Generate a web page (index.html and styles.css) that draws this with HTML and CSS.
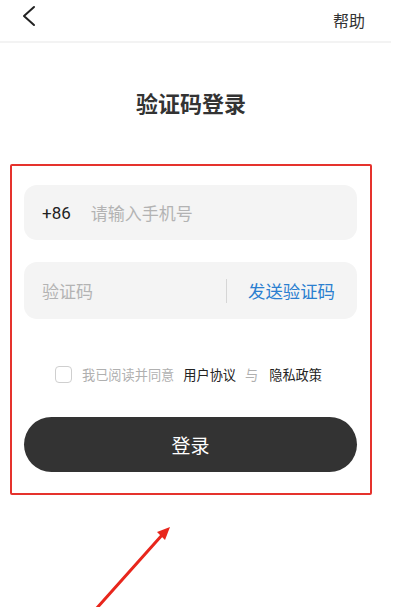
FILE: index.html
```html
<!DOCTYPE html>
<html lang="zh">
<head>
<meta charset="utf-8">
<link rel="stylesheet" href="styles.css">
</head>
<body>
<div class="page">
  <header class="topbar">
    <svg class="back" width="16" height="22" viewBox="0 0 16 22"><path d="M13 2 L3 11 L13 20" fill="none" stroke="#222" stroke-width="2" stroke-linecap="round" stroke-linejoin="round"/></svg>
    <span class="help">帮助</span>
  </header>
  <h1 class="title">验证码登录</h1>
  <div class="form">
    <div class="field">
      <span class="prefix">+86</span>
      <span class="placeholder">请输入手机号</span>
    </div>
    <div class="field field-code">
      <span class="placeholder grow">验证码</span>
      <span class="vline"></span>
      <span class="send">发送验证码</span>
    </div>
    <div class="agree">
      <span class="check"></span>
      <span class="muted">我已阅读并同意</span>
      <span class="link">用户协议</span>
      <span class="muted">与</span>
      <span class="link">隐私政策</span>
    </div>
    <button class="login">登录</button>
  </div>
  <svg class="arrow" width="396" height="607" viewBox="0 0 396 607">
    <line x1="96" y1="609" x2="163" y2="534" stroke="#e8261c" stroke-width="3" stroke-linecap="round"/>
    <polygon points="170,527 157,532 165,540" fill="#e8261c"/>
  </svg>
</div>
</body>
</html>
```
FILE: styles.css
```css
* { box-sizing: border-box; }
html, body { margin: 0; padding: 0; background: #fff; }
body {
  font-family: "Noto Sans CJK SC", "Noto Sans", sans-serif;
  color: #333;
}
.page {
  position: relative;
  width: 396px;
  height: 607px;
  overflow: hidden;
}
.topbar {
  height: 43px;
  margin-right: 5px;
  border-bottom: 2px solid #f3f3f3;
  display: flex;
  align-items: flex-start;
  justify-content: space-between;
  padding: 5px 26px 0 21px;
}
.back { display: block; margin-top: 0; }
.help {
  font-size: 16px;
  line-height: 20px;
  color: #333;
  margin-top: 5px;
}
.title {
  margin: 45px 0 0;
  padding-right: 14px;
  text-align: center;
  font-size: 22px;
  line-height: 28px;
  font-weight: 700;
  color: #333;
  letter-spacing: 0;
}
.form {
  margin: 48px 0 0 10px;
  width: 362px;
  border: 2px solid #e5322d;
  border-radius: 2px;
  padding: 19px 13px 21px 12px;
  display: flex;
  flex-direction: column;
}
.field {
  height: 55px;
  background: #f4f4f4;
  border-radius: 13px;
  display: flex;
  align-items: center;
  padding: 0 18px;
  font-size: 17px;
}
.field-code {
  margin-top: 22px;
  height: 57px;
  padding-right: 22px;
}
.prefix {
  font-family: Roboto, "Noto Sans", sans-serif;
  color: #222;
  margin-right: 20px;
}
.placeholder { color: #b3b3b3; }
.grow { flex: 1; }
.vline {
  width: 1px;
  height: 24px;
  background: #d6d6d6;
  margin-right: 21px;
}
.send { color: #2b7fd0; font-size: 17.4px; }
.agree {
  margin-top: 47px;
  padding-left: 31px;
  display: flex;
  align-items: center;
  font-size: 13.2px;
  line-height: 17px;
}
.check {
  width: 17px;
  height: 17px;
  border: 1px solid #cfcfcf;
  border-radius: 4px;
  margin-right: 10px;
}
.muted { color: #b0b0b0; }
.link { color: #222; margin: 0 9px; }
.agree .link:last-child { margin-right: 0; margin-left: 11px; }
.login {
  margin-top: 34px;
  height: 55px;
  border: none;
  border-radius: 28px;
  background: #333333;
  color: #fff;
  font-family: "Noto Sans CJK SC", sans-serif;
  font-size: 19px;
  padding: 0;
}
.arrow {
  position: absolute;
  left: 0;
  top: 0;
  pointer-events: none;
}
```
